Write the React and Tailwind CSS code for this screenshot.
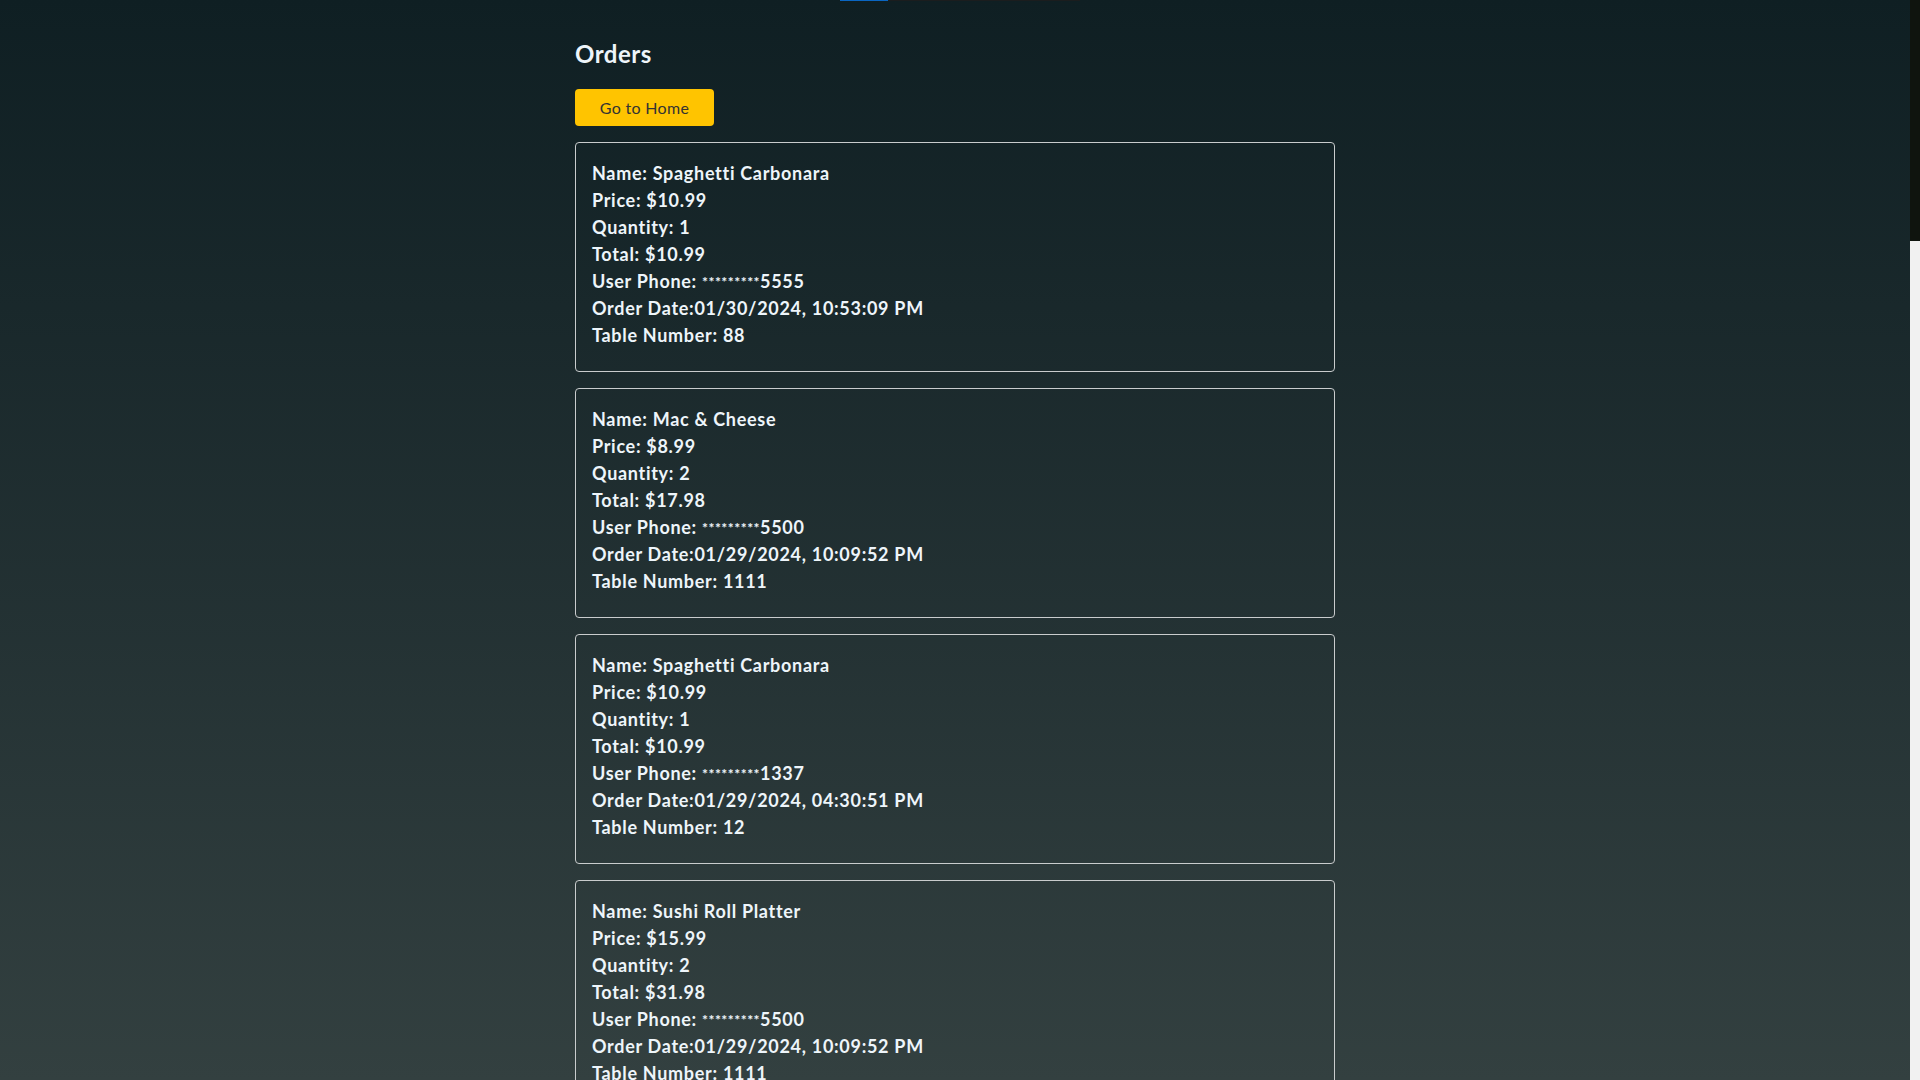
import React from "react";

const orders = [
  { name: "Spaghetti Carbonara", price: "$10.99", qty: 1, total: "$10.99", phone: "5555", date: "01/30/2024, 10:53:09 PM", table: "88" },
  { name: "Mac & Cheese", price: "$8.99", qty: 2, total: "$17.98", phone: "5500", date: "01/29/2024, 10:09:52 PM", table: "1111" },
  { name: "Spaghetti Carbonara", price: "$10.99", qty: 1, total: "$10.99", phone: "1337", date: "01/29/2024, 04:30:51 PM", table: "12" },
  { name: "Sushi Roll Platter", price: "$15.99", qty: 2, total: "$31.98", phone: "5500", date: "01/29/2024, 10:09:52 PM", table: "1111" },
  { name: "Mac & Cheese", price: "$8.99", qty: 1, total: "$8.99", phone: "5555", date: "01/29/2024, 09:12:40 PM", table: "7" },
];

function OrderCard({ o }) {
  return (
    <div className="border border-[#c9cccd] rounded-[4px] pt-[17px] pb-[22px] px-[16px] text-[18px] leading-[27px] font-bold tracking-[0.7px] text-[#eef5fa]">
      <p>Name: {o.name}</p>
      <p>Price: {o.price}</p>
      <p>Quantity: {o.qty}</p>
      <p>Total: {o.total}</p>
      <p>
        User Phone: <span className="text-[14px] tracking-[0.5px] align-top">*********</span>
        {o.phone}
      </p>
      <p>Order Date:{o.date}</p>
      <p>Table Number: {o.table}</p>
    </div>
  );
}

export default function App() {
  return (
    <div
      className="flex h-screen w-full overflow-hidden"
      style={{ fontFamily: "Lato, 'Open Sans', sans-serif" }}
    >
      <main className="flex-1 overflow-hidden bg-gradient-to-b from-[#0f1f23] to-[#334040]">
        <div className="flex h-[1px]">
          <div className="w-[840px]" />
          <div className="w-[48px] bg-[#0a66c2]" />
          <div className="w-[192px] bg-[#1b1d1e]" />
        </div>
        <div className="w-[760px] mx-auto pt-[35px]">
          <h2 className="text-[24px] leading-[36px] font-bold tracking-[0.5px] text-[#eef5fa]">Orders</h2>
          <button className="mt-[17px] w-[139px] h-[37px] rounded-[4px] bg-[#ffc400] text-[#333] text-[16px] tracking-[0.3px] leading-none">
            Go to Home
          </button>
          <div className="mt-[16px] flex flex-col gap-[16px]">
            {orders.map((o, i) => (
              <OrderCard key={i} o={o} />
            ))}
          </div>
        </div>
      </main>
      <div className="w-[10px] bg-[#f1f1f1] flex flex-col">
        <div className="h-[241px] bg-[#0f140e]" />
      </div>
    </div>
  );
}
